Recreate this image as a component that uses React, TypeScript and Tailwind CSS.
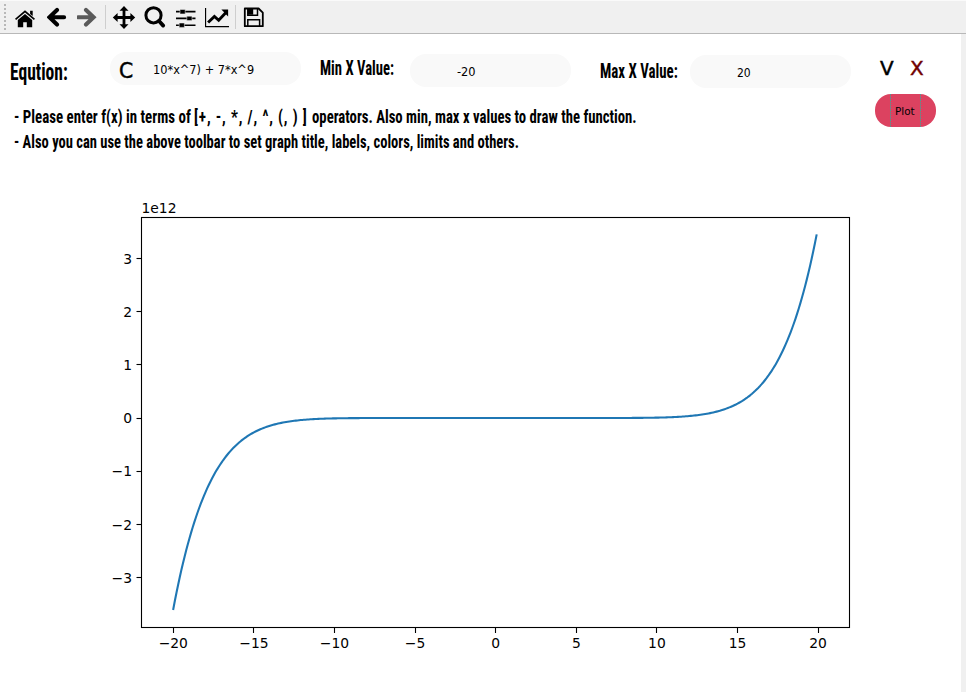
import { useLayoutEffect, useRef, useState } from 'react';
import type { ReactNode } from 'react';

type FitProps = { text: string; width: number; className?: string };

// Squeezes or stretches one line of text to a fixed width.
function FitText({ text, width, className = '' }: FitProps) {
  const ref = useRef<HTMLSpanElement>(null);
  const [scale, setScale] = useState(1);
  useLayoutEffect(() => {
    if (ref.current) setScale(width / ref.current.offsetWidth);
  }, [text, width]);
  return (
    <span className="block whitespace-pre leading-none" style={{ width }}>
      <span ref={ref} className={'inline-block origin-left whitespace-pre align-top ' + className} style={{ transform: `scaleX(${scale})` }}>
        {text}
      </span>
    </span>
  );
}

const titleFont = "font-['Liberation_Sans_Narrow','Roboto_Condensed',Roboto,sans-serif] font-bold text-black";
const inputFont = "font-['DejaVu_Sans_Condensed','DejaVu_Sans',sans-serif] text-black";
const heavy = ' [-webkit-text-stroke:0.4px]';

function Tool({ label, className, children }: { label: string; className: string; children: ReactNode }) {
  return (
    <button aria-label={label} className={'h-6 shrink-0 ' + className}>
      <svg className="block h-6 w-full" viewBox="0 0 24 24" fill="none" stroke="none">
        {children}
      </svg>
    </button>
  );
}

function Toolbar() {
  return (
    <header className="flex h-[34px] shrink-0 items-start border-b border-[#b8b8b8] bg-[#f0f0f0] pt-[5px] shadow-[inset_0_1px_0_#fafafa]">
      <div className="ml-1 mr-[9px] mt-[-1px] h-[26px] w-[2px] border-l-2 border-dotted border-[#b8b8b8]" />
      <Tool label="Home" className="w-6">
        <path fill="#000" d="M10 4.5 20 13l-1.1 1.2L10 6.8l-8.9 7.4L0 13z" transform="translate(0 .8)" />
        <path fill="#000" d="M15.1 5h2.6v5.3l-2.6-2.2zM10 8.2l7.2 6.1v7.2h-5.4v-5H8.2v5H2.8v-7.2z" transform="translate(0 .8)" />
      </Tool>
      <Tool label="Back" className="ml-[8px] w-6">
        <path d="M10 5 2.4 12.3l7.6 7.3M3.2 12.3h13.9" stroke="#000" strokeWidth="4.1" strokeLinecap="round" />
      </Tool>
      <Tool label="Forward" className="ml-[6px] w-6">
        <path d="M9 5l7.6 7.3L9 19.6M15.8 12.3H1.2" stroke="#5a5a5a" strokeWidth="4.1" strokeLinecap="round" />
      </Tool>
      <div className="ml-[4px] mr-[6px] h-6 w-px bg-[#cecece]" />
      <Tool label="Pan" className="w-6">
        <path d="M12 4v17M3.5 12.5h17" stroke="#000" strokeWidth="2.8" />
        <path fill="#000" d="M12 1l4.5 4.8h-9zM12 24l4.5-4.8h-9zM.8 12.5l4.8-4.5v9zM23.2 12.5l-4.8-4.5v9z" />
      </Tool>
      <Tool label="Zoom" className="ml-[7px] w-6">
        <circle cx="10.5" cy="10.3" r="7.6" stroke="#000" strokeWidth="3" />
        <path d="M16 16l4.2 4.6" stroke="#000" strokeWidth="3.8" strokeLinecap="round" />
      </Tool>
      <Tool label="Subplots" className="ml-[7px] w-6">
        <path d="M2 6.6h19.5M2 13.4h19.5M2 20.2h19.5" stroke="#000" strokeWidth="1.6" />
        <path d="M6 4.5h5.2v4.4H6zM12.8 11.2H18v4.4h-5.2zM5.2 18h5.2v4.4H5.2z" fill="#000" stroke="#f0f0f0" strokeWidth=".5" />
      </Tool>
      <Tool label="Axes" className="ml-[7px] w-6">
        <path d="M.5 3v18.7H24" stroke="#000" strokeWidth="1.3" />
        <path d="M3.1 17.5l6.3-6.1 4.3 3.9 7.5-8" stroke="#000" strokeWidth="2.9" />
        <path d="M16.4 4.6h6.7v6.8z" fill="#000" />
      </Tool>
      <div className="ml-[6px] mr-[6px] h-6 w-px bg-[#cecece]" />
      <Tool label="Save" className="w-6">
        <path d="M2.8 3.5h13.8l4.2 4.2v13.5H2.8z" stroke="#000" strokeWidth="1.8" strokeLinejoin="round" />
        <path d="M5.8 3.5v6.8h9.7V3.5M5.8 21v-6.3h11.8V21" stroke="#000" strokeWidth="1.5" />
        <path d="M5.8 3.5h5.4v6.2H5.8z" fill="#000" />
      </Tool>
    </header>
  );
}

const px = (x: number) => 495.7 + x * 16.12;
const py = (y: number) => 384 - y * 53.1;
const curve = Array.from({ length: 400 }, (_, i) => {
  const x = -20 + i * 0.1;
  const y = (7 * x ** 9 + 10 * x ** 7) / 1e12;
  return `${px(x).toFixed(2)},${py(y).toFixed(2)}`;
}).join(' ');
const minus = (n: number) => (n < 0 ? '\u2212' + -n : String(n));

function Plot() {
  return (
    <svg className="mt-[-20px] block h-[498px] w-[961px] font-['DejaVu_Sans',sans-serif]" viewBox="0 160 961 498" fontSize="13.89" fill="#000">
      <polyline points={curve} fill="none" stroke="#1f77b4" strokeWidth="2.08" strokeLinecap="square" strokeLinejoin="round" />
      <rect x="141.5" y="183.5" width="708" height="410" fill="none" stroke="#000" strokeWidth="1.1" />
      <text x="141.5" y="179">1e12</text>
      {[-20, -15, -10, -5, 0, 5, 10, 15, 20].map((n) => (
        <g key={n}>
          <path d={`M${Math.floor(px(n)) + 0.5} 594v5`} stroke="#000" strokeWidth="1.1" />
          <text x={px(n)} y="614" textAnchor="middle">{minus(n)}</text>
        </g>
      ))}
      {[3, 2, 1, 0, -1, -2, -3].map((n) => (
        <g key={n}>
          <path d={`M136.5 ${Math.floor(py(n)) + 0.5}h5`} stroke="#000" strokeWidth="1.1" />
          <text x="132" y={py(n) + 5.3} textAnchor="end">{minus(n)}</text>
        </g>
      ))}
    </svg>
  );
}

export default function App() {
  return (
    <div className="flex h-[692px] w-[966px] flex-col overflow-hidden bg-[#f0f0f0]">
      <Toolbar />
      <main className="h-[658px] w-[961px] bg-white">
        <div className="flex h-[180px]">
          <div className="w-[860px]">
            <div className="flex h-[68px] items-start">
              <div className="ml-[10px] mt-[27px] w-[100px]">
                <FitText text="Eqution:" width={58} className={titleFont + ' text-[23px] leading-6'} />
              </div>
              <div className="mt-[18px] flex h-[33px] w-[191px] items-center rounded-[16px] bg-[#f9f9f9]">
                <div className="ml-[9px] mt-[4px] w-[34px]">
                  <FitText text="C" width={14} className={inputFont + heavy + ' text-[21px] leading-6'} />
                </div>
                <div className="pt-[2px]">
                  <FitText text="10*x^7) + 7*x^9" width={101} className={inputFont + ' text-[12px] leading-4'} />
                </div>
              </div>
              <div className="ml-[19px] mt-[22px] w-[90px]">
                <FitText text="Min X Value:" width={74} className={titleFont + ' text-[21px] leading-6'} />
              </div>
              <div className="mt-[20px] h-[33px] w-[161px] rounded-[16px] bg-[#f9f9f9] pl-[47px] pt-[10px]">
                <FitText text="-20" width={19} className={inputFont + ' text-[12px] leading-4'} />
              </div>
              <div className="ml-[29px] mt-[25px] w-[90px]">
                <FitText text="Max X Value:" width={78} className={titleFont + ' text-[21px] leading-6'} />
              </div>
              <div className="mt-[21px] h-[33px] w-[161px] rounded-[16px] bg-[#f9f9f9] pl-[47px] pt-[10px]">
                <FitText text="20" width={14} className={inputFont + ' text-[12px] leading-4'} />
              </div>
            </div>
            <div className="ml-[14px] mt-[2px]">
              <div className="flex h-[25px]">
                <FitText text="- Please enter f(x) in terms of " width={180} className={titleFont + ' text-[18px] leading-[25px]'} />
                <FitText text="[+, -, *, /, ^, (, ) ] " width={118} className={titleFont + ' text-[18px] leading-[25px] tracking-[1px]'} />
                <FitText text="operators. Also min, max x values to draw the function." width={325} className={titleFont + ' text-[18px] leading-[25px]'} />
              </div>
              <FitText text="- Also you can use the above toolbar to set graph title, labels, colors, limits and others." width={505} className={titleFont + ' text-[18px] leading-[25px]'} />
            </div>
          </div>
          <div className="w-[101px] pl-[15px] pt-[22px]">
            <div className="flex h-[38px] pl-[5px]">
              <div className="w-[30px]"><FitText text="V" width={14} className={inputFont + heavy + ' text-[19px] leading-6'} /></div>
              <FitText text="X" width={14} className={inputFont + heavy + ' text-[19px] leading-6 !text-[#700000]'} />
            </div>
            <button className="flex h-[33px] w-[61px] justify-center rounded-[16px] bg-[#dc4260]">
              <span className="flex h-[33px] w-[31px] items-center justify-center border-x border-dotted border-[#2fae9c] pr-[2px] pt-[2px]">
                <FitText text="Plot" width={20} className={inputFont + ' text-[11px] leading-4'} />
              </span>
            </button>
          </div>
        </div>
        <Plot />
      </main>
    </div>
  );
}
